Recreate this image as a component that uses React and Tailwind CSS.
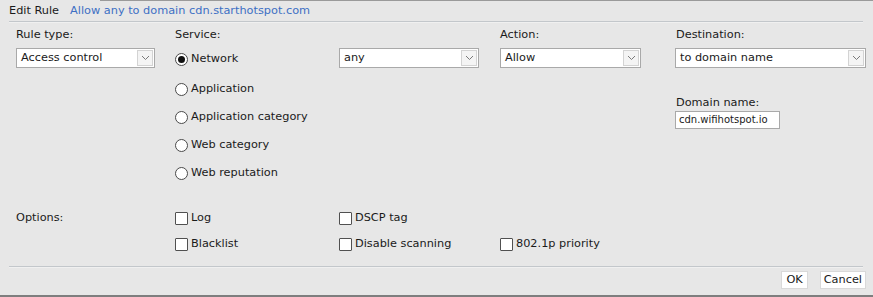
import React from "react";

function Chevron() {
  return (
    <svg width="9" height="6" viewBox="0 0 9 6" className="block">
      <path d="M1 1 L4.5 4.5 L8 1" fill="none" stroke="#7a7a7a" strokeWidth="1" />
    </svg>
  );
}

function Select({ value, className }) {
  return (
    <div className={"flex h-[20px] items-stretch border border-[#a9a9a9] bg-white " + className}>
      <div className="flex flex-1 items-center pl-[4px] text-[#1a1a1a]">{value}</div>
      <div className="m-[1px] flex w-[16px] items-center justify-center border border-[#d3d3d3] bg-[#f4f4f4]">
        <Chevron />
      </div>
    </div>
  );
}

function Radio({ checked, label, className = "" }) {
  return (
    <div className={"flex h-[20px] items-center " + className}>
      <div className="flex h-[13px] w-[13px] items-center justify-center rounded-full border border-[#4a4a4a] bg-white">
        {checked && <div className="h-[7px] w-[7px] rounded-full bg-[#111]" />}
      </div>
      <span className="ml-[3px] text-[#1a1a1a]">{label}</span>
    </div>
  );
}

function Check({ label }) {
  return (
    <div className="flex h-[20px] items-center">
      <div className="h-[13px] w-[13px] rounded-[1px] border border-[#505050] bg-white" />
      <span className="ml-[3px] text-[#1a1a1a]">{label}</span>
    </div>
  );
}

export default function App() {
  return (
    <div
      className="relative h-[297px] w-[873px] overflow-hidden bg-[#e7e7e7] text-[11.3px] leading-[14px] text-[#1a1a1a]"
      style={{ fontFamily: '"DejaVu Sans", "Liberation Sans", sans-serif' }}
    >
      <div className="ml-[100px] h-[1px] bg-[#9a9a9a]" />
      <div className="flex h-[20px] items-center pl-[9px]">
        <span className="text-[#1a1a1a]">Edit Rule</span>
        <span className="ml-[11px] text-[#3d6fc4]">Allow any to domain cdn.starthotspot.com</span>
      </div>
      <div className="mx-[9px] mr-[10px] h-[2px] border-t border-[#c3c7cb] bg-[#f0f0f0]" />

      <div className="grid grid-cols-[159px_164px_161px_175px_190px] pl-[16px] pt-[5px]">
        {/* col1 */}
        <div className="flex flex-col">
          <div className="h-[14px]">Rule type:</div>
          <Select value="Access control" className="mt-[6px] w-[139px]" />
        </div>
        {/* col2 */}
        <div className="flex flex-col">
          <div className="h-[14px]">Service:</div>
          <div className="mt-[7px] flex flex-col gap-[8px]">
            <Radio checked label="Network" />
            <Radio label="Application" className="mt-[2px]" />
            <Radio label="Application category" />
            <Radio label="Web category" />
            <Radio label="Web reputation" />
          </div>
        </div>
        {/* col3 */}
        <div className="flex flex-col">
          <div className="h-[14px]"></div>
          <Select value="any" className="mt-[6px] w-[140px]" />
        </div>
        {/* col4 */}
        <div className="flex flex-col">
          <div className="h-[14px]">Action:</div>
          <Select value="Allow" className="mt-[6px] w-[141px]" />
        </div>
        {/* col5 */}
        <div className="flex flex-col">
          <div className="h-[14px] pl-[1px]">Destination:</div>
          <Select value="to domain name" className="mt-[6px] w-[191px]" />
          <div className="mt-[28px] h-[14px] pl-[1px]">Domain name:</div>
          <div className="mt-[1px] flex h-[18px] w-[105px] items-center border border-[#a9a9a9] bg-white pl-[3px] text-[10px]">
            cdn.wifihotspot.io
          </div>
        </div>
      </div>

      <div className="mt-[25px] grid grid-cols-[159px_164px_161px_1fr] pl-[16px]">
        <div className="flex h-[20px] items-center">Options:</div>
        <div className="flex flex-col gap-[6px]">
          <Check label="Log" />
          <Check label="Blacklist" />
        </div>
        <div className="flex flex-col gap-[6px]">
          <Check label="DSCP tag" />
          <Check label="Disable scanning" />
        </div>
        <div className="flex flex-col gap-[6px]">
          <div className="h-[20px]" />
          <Check label="802.1p priority" />
        </div>
      </div>

      <div className="mx-[9px] mr-[10px] mt-[12px] h-[2px] border-t border-[#c3c7cb] bg-[#f0f0f0]" />

      <div className="mt-[3px] flex justify-end gap-[12px] pr-[7px]">
        <div className="flex h-[18px] items-center border border-[#d9d9d9] bg-white px-[4px]">OK</div>
        <div className="flex h-[18px] items-center border border-[#d9d9d9] bg-white px-[3px]">Cancel</div>
      </div>

      <div className="absolute bottom-0 left-0 h-[2px] w-full bg-[#7e7e7e]" />
    </div>
  );
}
